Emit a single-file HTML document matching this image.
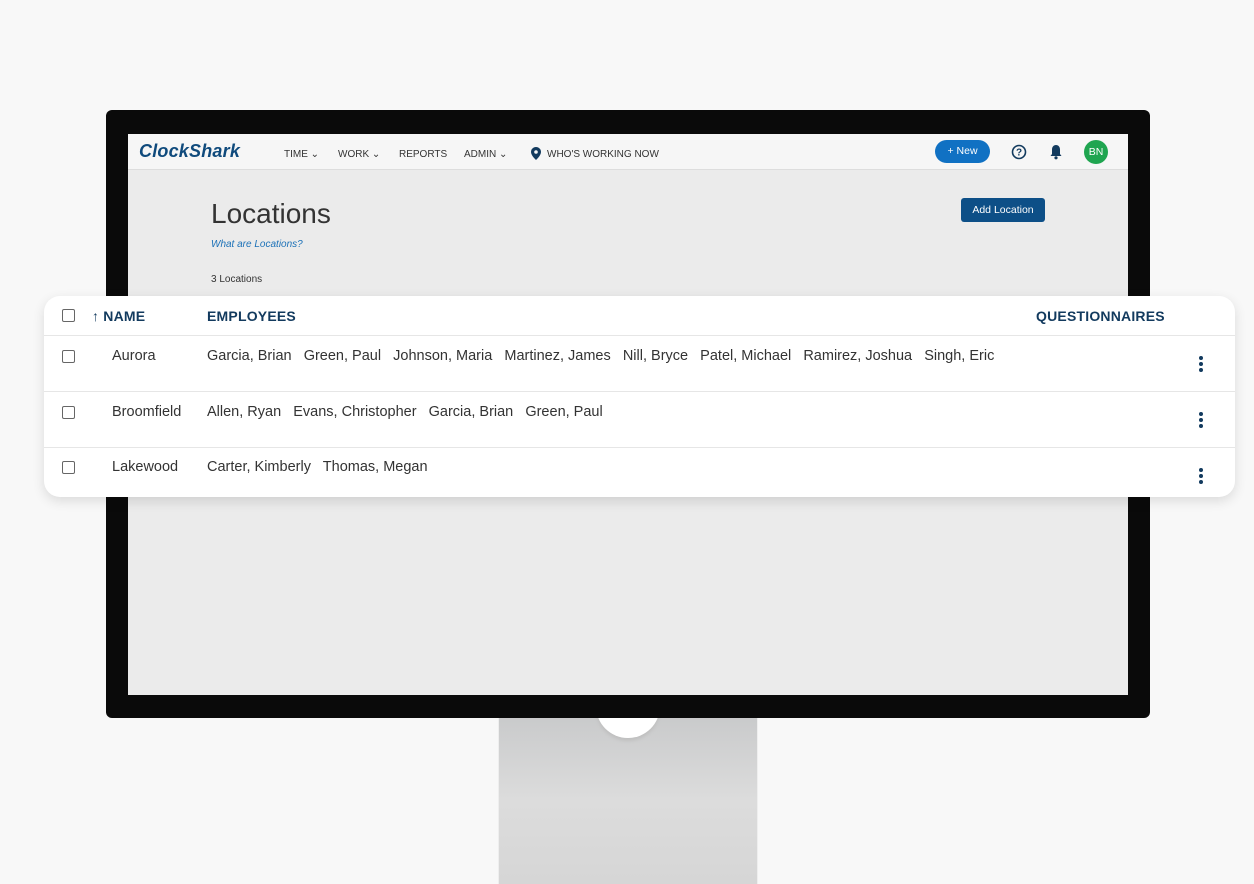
<!DOCTYPE html>
<html><head><style>
*{margin:0;padding:0;box-sizing:border-box}
body{width:1254px;height:884px;background:#f8f8f8;position:relative;overflow:hidden;font-family:"Liberation Sans",sans-serif}
.abs{position:absolute}
.stand{left:498px;top:716px;width:260px;height:168px;background:linear-gradient(#c9cacb,#dcdcdc 50%,#d6d6d6);border-left:1px solid #eee;border-right:1px solid #eee}
.notch{left:596px;top:700px;width:64px;height:38px;background:#fff;border-radius:0 0 32px 32px;box-shadow:0 3px 3px #c0c0c0}
.bezel{left:106px;top:110px;width:1044px;height:608px;background:#0a0a0a;border-radius:6px}
.screen{left:128px;top:134px;width:1000px;height:561px;background:#ebebeb}
.nav{left:128px;top:134px;width:1000px;height:36px;background:#f6f6f6;border-bottom:1px solid #ddd}
.nav span{position:absolute;top:15px;font-size:10px;color:#333}
.logo{left:139px;top:141px;font:italic bold 18px "Liberation Sans",sans-serif;color:#0f4a7c;letter-spacing:0.2px}
.card{left:44px;top:296px;width:1191px;height:201px;background:#fff;border-radius:16px;box-shadow:0 4px 12px rgba(0,0,0,.12)}
.cb{position:absolute;left:18px;width:13px;height:13px;border:1.3px solid #666;border-radius:2px}
.hd{position:absolute;top:12px;font-size:14px;font-weight:bold;color:#123a5e;letter-spacing:.2px}
.line{position:absolute;left:0;width:1191px;height:1px;background:#e6e6e6}
.row{position:absolute;font-size:14.5px;color:#333}
.dots{position:absolute;left:1155px;width:4px}
.dots i{display:block;width:4px;height:4px;border-radius:2px;background:#123a5e;margin-bottom:2px}
</style></head><body>
<div class="abs stand"></div>
<div class="abs notch"></div>
<div class="abs bezel"></div>
<div class="abs screen"></div>
<div class="abs nav">
<span style="left:156px">TIME ⌄</span>
<span style="left:210px">WORK ⌄</span>
<span style="left:271px">REPORTS</span>
<span style="left:336px">ADMIN ⌄</span>
<svg style="position:absolute;left:403px;top:13px" width="10" height="13" viewBox="0 0 10 13"><path d="M5 0C2.2 0 0 2.2 0 5c0 3.5 5 8 5 8s5-4.5 5-8C10 2.2 7.8 0 5 0z" fill="#123a5e"/><circle cx="5" cy="5" r="1.8" fill="#f6f6f6"/></svg>
<span style="left:419px">WHO'S WORKING NOW</span>
<div style="position:absolute;left:807px;top:6px;width:55px;height:23px;background:#1071c3;border-radius:12px;color:#fff;font-size:10.5px;text-align:center;line-height:23px">+ New</div>
<svg style="position:absolute;left:883px;top:10px" width="16" height="16" viewBox="0 0 16 16"><circle cx="8" cy="8" r="6.5" fill="none" stroke="#123a5e" stroke-width="1.6"/><text x="8" y="11.5" font-size="10" font-weight="bold" text-anchor="middle" fill="#123a5e" font-family="Liberation Sans">?</text></svg>
<svg style="position:absolute;left:921px;top:10px" width="14" height="16" viewBox="0 0 14 16"><path d="M7 1C4.5 1 3 3 3 5.5V10L1.5 12h11L11 10V5.5C11 3 9.5 1 7 1z" fill="#123a5e"/><circle cx="7" cy="13.8" r="1.6" fill="#123a5e"/></svg>
<div style="position:absolute;left:956px;top:6px;width:24px;height:24px;background:#1fa550;border-radius:12px;color:#fff;font-size:10.5px;text-align:center;line-height:24px">BN</div>
</div>
<div class="abs logo">ClockShark</div>
<div class="abs" style="left:211px;top:198px;font-size:28px;color:#333;font-weight:300">Locations</div>
<div class="abs" style="left:211px;top:239px;font-size:10px;color:#1d72b8;font-style:italic">What are Locations?</div>
<div class="abs" style="left:211px;top:274px;font-size:10px;color:#333">3 Locations</div>
<div class="abs" style="left:961px;top:198px;width:84px;height:24px;background:#0d4f87;border-radius:3px;color:#fff;font-size:10.5px;text-align:center;line-height:24px">Add Location</div>
<div class="abs card">
<div class="cb" style="top:13px"></div>
<div class="hd" style="left:48px">↑ NAME</div>
<div class="hd" style="left:163px">EMPLOYEES</div>
<div class="hd" style="left:992px">QUESTIONNAIRES</div>
<div class="line" style="top:39px"></div>
<div class="cb" style="top:54px"></div>
<div class="row" style="left:68px;top:52px">Aurora</div>
<div class="row" style="left:163px;top:52px">Garcia, Brian &nbsp; Green, Paul &nbsp; Johnson, Maria &nbsp; Martinez, James &nbsp; Nill, Bryce &nbsp; Patel, Michael &nbsp; Ramirez, Joshua &nbsp; Singh, Eric</div>
<div class="dots" style="top:60px"><i></i><i></i><i></i></div>
<div class="line" style="top:95px"></div>
<div class="cb" style="top:110px"></div>
<div class="row" style="left:68px;top:108px">Broomfield</div>
<div class="row" style="left:163px;top:108px">Allen, Ryan &nbsp; Evans, Christopher &nbsp; Garcia, Brian &nbsp; Green, Paul</div>
<div class="dots" style="top:116px"><i></i><i></i><i></i></div>
<div class="line" style="top:151px"></div>
<div class="cb" style="top:165px"></div>
<div class="row" style="left:68px;top:163px">Lakewood</div>
<div class="row" style="left:163px;top:163px">Carter, Kimberly &nbsp; Thomas, Megan</div>
<div class="dots" style="top:172px"><i></i><i></i><i></i></div>
</div>
</body></html>
